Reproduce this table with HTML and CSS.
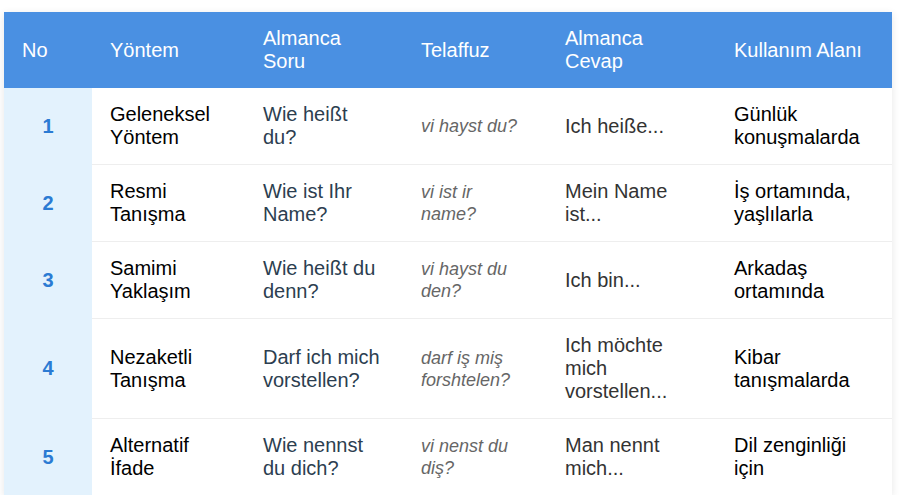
FILE: index.html
```html
<!DOCTYPE html>
<html lang="tr">
<head>
<meta charset="utf-8">
<title>Tanışma</title>
<link rel="stylesheet" href="styles.css">
</head>
<body>
<div class="wrap">
<table class="tbl">
<colgroup>
<col class="c1"><col class="c2"><col class="c3"><col class="c4"><col class="c5"><col class="c6">
</colgroup>
<thead>
<tr><th>No</th><th>Yöntem</th><th>Almanca Soru</th><th>Telaffuz</th><th>Almanca Cevap</th><th>Kullanım Alanı</th></tr>
</thead>
<tbody>
<tr><td class="num">1</td><td class="method">Geleneksel Yöntem</td><td class="de">Wie heißt du?</td><td class="pron">vi hayst du?</td><td class="ans">Ich heiße...</td><td class="use">Günlük konuşmalarda</td></tr>
<tr><td class="num">2</td><td class="method">Resmi Tanışma</td><td class="de">Wie ist Ihr Name?</td><td class="pron">vi ist ir name?</td><td class="ans">Mein Name ist...</td><td class="use">İş ortamında, yaşlılarla</td></tr>
<tr><td class="num">3</td><td class="method">Samimi Yaklaşım</td><td class="de">Wie heißt du denn?</td><td class="pron">vi hayst du den?</td><td class="ans">Ich bin...</td><td class="use">Arkadaş ortamında</td></tr>
<tr><td class="num">4</td><td class="method">Nezaketli Tanışma</td><td class="de">Darf ich mich vorstellen?</td><td class="pron">darf iş miş forshtelen?</td><td class="ans">Ich möchte mich vorstellen...</td><td class="use">Kibar tanışmalarda</td></tr>
<tr><td class="num">5</td><td class="method">Alternatif İfade</td><td class="de">Wie nennst du dich?</td><td class="pron">vi nenst du diş?</td><td class="ans">Man nennt mich...</td><td class="use">Dil zenginliği için</td></tr>
</tbody>
</table>
</div>
</body>
</html>
```
FILE: styles.css
```css
html, body {
  margin: 0;
  padding: 0;
  background: #ffffff;
}
body {
  font-family: "Liberation Sans", Arial, sans-serif;
  font-size: 20px;
  line-height: 23px;
}
.wrap {
  padding: 12px 0 0 4px;
}
.tbl {
  width: 888px;
  border-collapse: collapse;
  table-layout: fixed;
  background: #fff;
  box-shadow: 0 2px 8px rgba(0, 0, 0, 0.1);
}
.c1 { width: 88px; }
.c2 { width: 153px; }
.c3 { width: 158px; }
.c4 { width: 144px; }
.c5 { width: 169px; }
.c6 { width: 176px; }
.tbl th {
  background: #4a90e2;
  color: #fff;
  font-weight: normal;
  text-align: left;
  padding: 15px 18px;
  vertical-align: middle;
}
.tbl td {
  padding: 15px 18px;
  vertical-align: middle;
  border-bottom: 1px solid #eeeeee;
}
.tbl tbody tr:last-child td {
  border-bottom: none;
}
.tbl td.num {
  background: #e3f2fd;
  color: #2b7bd3;
  font-weight: bold;
  text-align: center;
  border-bottom-color: #e3f2fd;
}
.method { color: #000; }
.de { color: #2c3e50; }
.pron {
  color: #666;
  font-style: italic;
  font-size: 18px;
  line-height: 22px;
}
.ans { color: #333; }
.use { color: #000; }
```
